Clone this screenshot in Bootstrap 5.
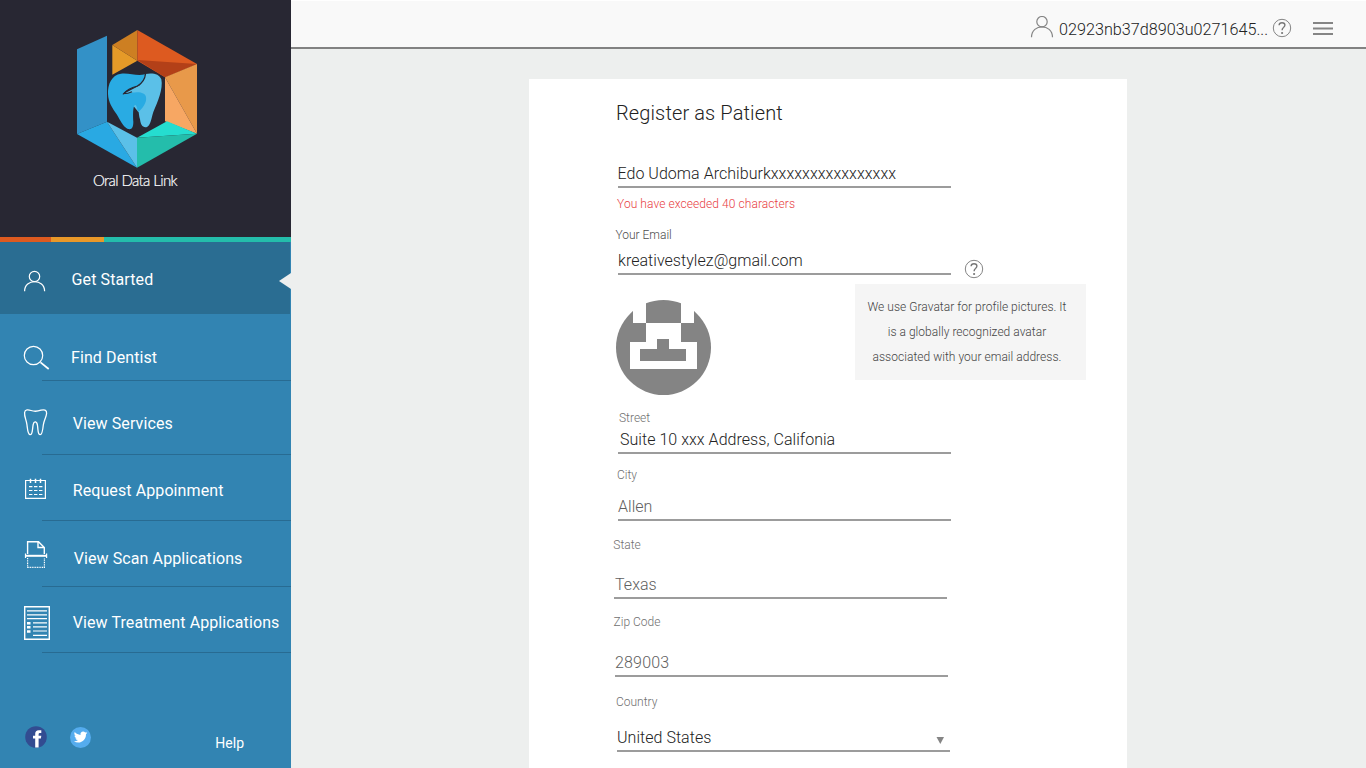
<!DOCTYPE html>
<html lang="en">
<head>
<meta charset="utf-8">
<meta name="viewport" content="width=device-width, initial-scale=1">
<title>Oral Data Link - Register as Patient</title>
<link href="https://cdn.jsdelivr.net/npm/bootstrap@5.3.0/dist/css/bootstrap.min.css" rel="stylesheet">
<style>
body{font-family:Roboto,sans-serif;font-size:16px;background:#edefee;height:100vh}
.sidebar{width:291px;background:#3284b2}
.brand{height:237px;background:#282733;padding:20px 0 0 60px}
.stripe{height:5px;background:#24bdab}
.stripe .s1{width:51px;background:#dd5a20}
.stripe .s2{width:53px;background:#e99829}
.menu-item{color:#fff;line-height:20px;height:66px;letter-spacing:.1px;text-decoration:none;background:linear-gradient(#286b92,#286b92) 42px 100%/249px 1px no-repeat;white-space:nowrap}
.menu-item svg{width:71px;flex:none;fill:none;stroke:#fff;stroke-width:1.2}
.menu-item.current{height:72px;width:290px;background:#2a6d92}
.menu-item.current::after{content:"";position:absolute;right:-1px;top:31px;border:8px solid transparent;border-right:12px solid #edefee;border-left:0}
.m1 span{padding:28px 0 0 .6px}.m2{height:67px}.m2 span{padding-top:34px}.m3{height:74px}.m3 span{padding:33px 0 0 1.7px}
.m4 span{padding:26px 0 0 1.7px}.m5 span{padding:28px 0 0 2.7px}.m6 span{padding:26px 0 0 1.7px}
.foot{padding:0 47px 15px 25px}
.foot svg{margin-bottom:4px}
.foot a{color:#fff;font-size:14px;line-height:20px}
.topbar{height:49px;background:#f9f9f9;border-top:1px solid #fff;border-bottom:2px solid #828282;padding:0 31px 0 0}
.topbar svg{flex:none}
.user-icon{margin:15px 5px 0 0}
.user-id{font-weight:300;font-size:16.2px;color:#222;line-height:20px;width:209px;margin:19px 4px 0 0;white-space:nowrap}
.hq{margin:17px 21px 0 0}
.burger{margin-top:17px}
.sheet{width:598px;margin:30px 0 0 238px;padding:0 0 0 87px;background:#fff}
.sheet h1{font-size:20px;font-weight:300;line-height:24px;color:#222;margin:0;padding-top:22px;letter-spacing:.12px}
.lbl{display:block;font-size:12px;line-height:16px;font-weight:300;color:#707070;white-space:nowrap}
.val{width:333px;height:26px;line-height:24px;border-bottom:2px solid #9c9c9c;font-weight:300;color:#222;white-space:nowrap;letter-spacing:.04px}
.val.soft{color:#606060}
.f-name{margin:37px 0 0 2px}.f-name .val{text-indent:-.5px}.err{color:#e8403f;margin:8px 0 0 1px;letter-spacing:.07px}
.f-email{margin-top:15px}.f-email .lbl{color:#4c4c4c;text-indent:-.6px}.f-email .val{margin:6px 0 0 2px}
.avatar{margin-top:25px}
.f-street{margin:15px 0 0 2px}.f-street .lbl{text-indent:1px}.f-street .val{margin-top:2px;text-indent:2px}
.f-city{margin:13px 0 0 2px}.f-city .lbl{text-indent:-1px}.f-city .val{margin-top:12px}
.f-state{margin:16px 0 0 -2px}.f-state .lbl{text-indent:-.7px}.f-state .val{margin-top:20px;text-indent:1px}
.f-zip{margin:15px 0 0 -1px}.f-zip .lbl{text-indent:-1.5px}.f-zip .val{margin-top:21px;letter-spacing:.18px}
.f-country{margin:17px 0 0 1px}.f-country .lbl{text-indent:-1px}.f-country .val{margin-top:16px}
.hint-icon{left:348px;top:32px}
.hint{left:239px;top:57px;width:231px;height:96px;background:#f5f5f5;font-size:12px;font-weight:300;line-height:25px;color:#444;padding:11px 7px 0 0;white-space:nowrap;letter-spacing:.03px}
</style>
</head>
<body class="d-flex overflow-hidden">
<svg class="d-none">
  <symbol id="help" viewBox="0 0 20 20"><circle cx="10" cy="10" r="8.7" fill="none" stroke="#858585"/><path d="M7.1 7.2Q7.2 4.7 10 4.7q2.9 0 2.9 2.4 0 1.3-1.4 2.4-1.4 1-1.4 2.7" fill="none" stroke="#777" stroke-width="1.4"/><circle cx="10.1" cy="15" r="1.1" fill="#777"/></symbol>
</svg>
<aside class="sidebar d-flex flex-column flex-shrink-0 h-100">
  <div class="brand">
    <svg class="d-block" width="150" height="180" viewBox="0 0 450 540">
      <path fill="#3391c7" d="M51 88 141 47V305L51 342z"/>
      <path fill="#29a9e3" d="M51 342 141 305 231 443z"/>
      <path fill="#5bc0e8" d="M141 305 231 353V443z"/>
      <path fill="#e59a28" d="M157 75V164L232 122z"/>
      <path fill="#cd7f22" d="M157 75 232 30V122z"/>
      <path fill="#dd5a20" d="M232 30 411 132 315 172 232 122z"/>
      <path fill="#b34018" d="M232 120 411 132 315 172z"/>
      <path fill="#e8994a" d="M315 172 411 132V341z"/>
      <path fill="#f7a763" d="M315 172 411 341 315 304z"/>
      <path fill="#25ddd0" d="M231 353 321 304 411 341z"/>
      <path fill="#24bdab" d="M231 353 411 341 231 443z"/>
      <path fill="#5bc0e8" d="M256 162C277 158 298 161 304 178 310 207 293 246 280 276 274 294 273 314 261 321 248 324 242 315 240 298 237 289 237 282 236 277L190 222 240 196z"/>
      <path fill="#29abe3" d="M255 163C230 170 210 158 183 161 155 165 143 192 144 222 145 247 157 264 170 283 181 301 188 319 202 326 215 331 220 323 220 306 219 285 218 262 225 254 230 256 231 263 234 276 248 266 261 248 258 231 254 215 230 213 190 224 195 208 222 205 242 192 251 183 253 174 255 163z"/>
      <path fill="none" stroke="#282733" stroke-width="3.5" d="M257 160Q254 186 232 198 203 206 191 221 204 221 216 215"/>
      <text x="99" y="499" font-family="Lato,sans-serif" font-weight="300" font-size="45" textLength="254" fill="#fff" stroke="#fff" stroke-width=".6">Oral Data Link</text>
    </svg>
  </div>
  <div class="stripe d-flex"><div class="s1"></div><div class="s2"></div></div>
  <nav class="d-flex flex-column flex-grow-1">
    <a class="menu-item current m1 d-flex position-relative" href="#"><svg viewBox="0 0 71 72"><circle cx="34.5" cy="34.5" r="5.2"/><path d="M24.6 49.2C24.6 36.5 44.6 36.5 44.6 49.2"/></svg><span>Get Started</span></a>
    <a class="menu-item m2 d-flex" href="#"><svg viewBox="0 0 71 67"><circle cx="33.5" cy="41.5" r="9.2"/><path stroke-width="1.7" d="M40.5 48.3 48.7 55"/></svg><span>Find Dentist</span></a>
    <a class="menu-item m3 d-flex" href="#"><svg viewBox="0 0 71 74"><path stroke-width="1.3" d="M24.6 31.5C25 28.2 28.5 28.7 31 29.5 34.5 30.7 37 30.6 41 29.2 44 28.3 47 28.8 46.6 32.5 46.3 36 44 39 43.3 44 42.8 49 42.2 53.7 40.2 53.7 37.6 53.7 38.2 49 37.5 44.5 37 40 34 40 33.3 43 32.2 47 33 53.7 30.2 53.7 27.8 53.7 27.5 48 27 44 26.2 38 24.2 36 24.6 31.5z"/></svg><span>View Services</span></a>
    <a class="menu-item m4 d-flex" href="#"><svg viewBox="0 0 71 66"><path d="M25.6 25.5H45.4V43.4H25.6z"/><path stroke-width="1.5" d="M30.5 23.7V28M35.5 23.7V28M40.5 23.7V28"/><path stroke-dasharray="3.4 1.6" d="M29 31.6H42.4M29 35.5H42.4M29 39.5H42.4"/></svg><span>Request Appoinment</span></a>
    <a class="menu-item m5 d-flex" href="#"><svg viewBox="0 0 71 66"><path stroke-width="1.4" d="M27.6 33V20.7H38.5L44.3 26.5V33M38 21V26.5H44"/><path stroke-width="2" d="M26 34.8H46.5"/><path d="M25.5 32.5V37M46.6 32.5V37"/><path stroke-dasharray="1 .7" d="M27.6 37V46.4H44.4V37"/></svg><span>View Scan Applications</span></a>
    <a class="menu-item m6 d-flex" href="#"><svg viewBox="0 0 71 66"><path stroke-width="1.4" d="M24.7 19.7H49.3V52.3H24.7z"/><path stroke-width="1.2" d="M27 23.9H47M27 27.8H47M27 31.7H47M33 35.8H47M33 39.8H47M33 44H47M33 48.3H47"/><path stroke-width="2.4" d="M27 36.3H30.5M27 40.3H30.5M27 44.5H30.5"/></svg><span>View Treatment Applications</span></a>
  </nav>
  <div class="foot d-flex align-items-end justify-content-between">
    <svg width="68" height="24" viewBox="25 725 68 24">
      <circle cx="36" cy="737" r="10.8" fill="#324c91"/><path fill="#fff" d="M35.2 747.6V738.6H33V735.7H35.2V733.8Q35.2 730.4 38.8 730.2H41.3V733H39.8Q38.6 733 38.6 734.2V735.7H41.3L40.9 738.6H38.6V747.4z"/>
      <circle cx="80.5" cy="737.5" r="10.5" fill="#55acee"/><path fill="#fff" transform="translate(73.9 731.4) scale(.56)" d="M23.95 2.57a10 10 0 0 1-2.82.77 4.96 4.96 0 0 0 2.16-2.72c-.95.55-2 .95-3.13 1.18a4.92 4.92 0 0 0-8.38 4.48C7.69 6.09 4.07 4.13 1.64 1.16a4.9 4.9 0 0 0 1.52 6.57 4.9 4.9 0 0 1-2.23-.61v.06a4.92 4.92 0 0 0 3.95 4.83 5 5 0 0 1-2.21.08 4.94 4.94 0 0 0 4.6 3.42A9.87 9.87 0 0 1 0 17.54a13.99 13.99 0 0 0 7.55 2.21c9.05 0 14-7.5 14-13.98 0-.21 0-.42-.02-.63a9.94 9.94 0 0 0 2.42-2.57z"/>
    </svg>
    <a class="text-decoration-none" href="#">Help</a>
  </div>
</aside>
<div class="d-flex flex-column flex-grow-1 h-100">
  <header class="topbar d-flex justify-content-end align-items-start">
    <svg class="user-icon" width="24" height="24" fill="none" stroke="#858585" stroke-width="1.2"><circle cx="12" cy="5.7" r="5.2"/><path d="M1.5 21.2C1.7 7.3 22.3 7.3 22.5 21.2"/></svg>
    <span class="user-id">02923nb37d8903u0271645...</span>
    <svg class="hq" width="20" height="20"><use href="#help"/></svg>
    <svg class="burger" width="22" height="20" stroke="#858585" stroke-width="2"><path d="M0 5H20M0 10.6H20M0 16H20"/></svg>
  </header>
  <main class="sheet flex-grow-1">
    <h1>Register as Patient</h1>
    <div class="f-name"><div class="val">Edo Udoma Archiburkxxxxxxxxxxxxxxxx</div></div>
    <span class="lbl err">You have exceeded 40 characters</span>
    <div class="f-email position-relative"><span class="lbl">Your Email</span><div class="val">kreativestylez@gmail.com</div>
      <svg class="hint-icon position-absolute" width="20" height="20"><use href="#help"/></svg>
      <div class="hint position-absolute text-center">We use Gravatar for profile pictures. It<br>is a globally recognized avatar<br>associated with your email address.</div>
    </div>
    <svg class="avatar d-block" width="95" height="95"><circle cx="47.5" cy="47.5" r="47.5" fill="#848484"/><path fill="#fff" d="M17 0H30V23H17zM65 0H78V23H65zM30 23H65V42H81V69H14V42H30z"/><path fill="#848484" d="M24 49H41V39H53V49H70V61H24z"/></svg>
    <div class="f-street"><span class="lbl">Street</span><div class="val">Suite 10 xxx Address, Califonia</div></div>
    <div class="f-city"><span class="lbl">City</span><div class="val soft">Allen</div></div>
    <div class="f-state"><span class="lbl">State</span><div class="val soft">Texas</div></div>
    <div class="f-zip"><span class="lbl">Zip Code</span><div class="val soft">289003</div></div>
    <div class="f-country"><span class="lbl">Country</span><div class="val d-flex justify-content-between"><span>United States</span><svg width="15" height="24"><path d="M1.5 11H9L5.3 18z" fill="#858585"/></svg></div></div>
  </main>
</div>
<script src="https://cdn.jsdelivr.net/npm/bootstrap@5.3.0/dist/js/bootstrap.bundle.min.js"></script>
</body>
</html>
